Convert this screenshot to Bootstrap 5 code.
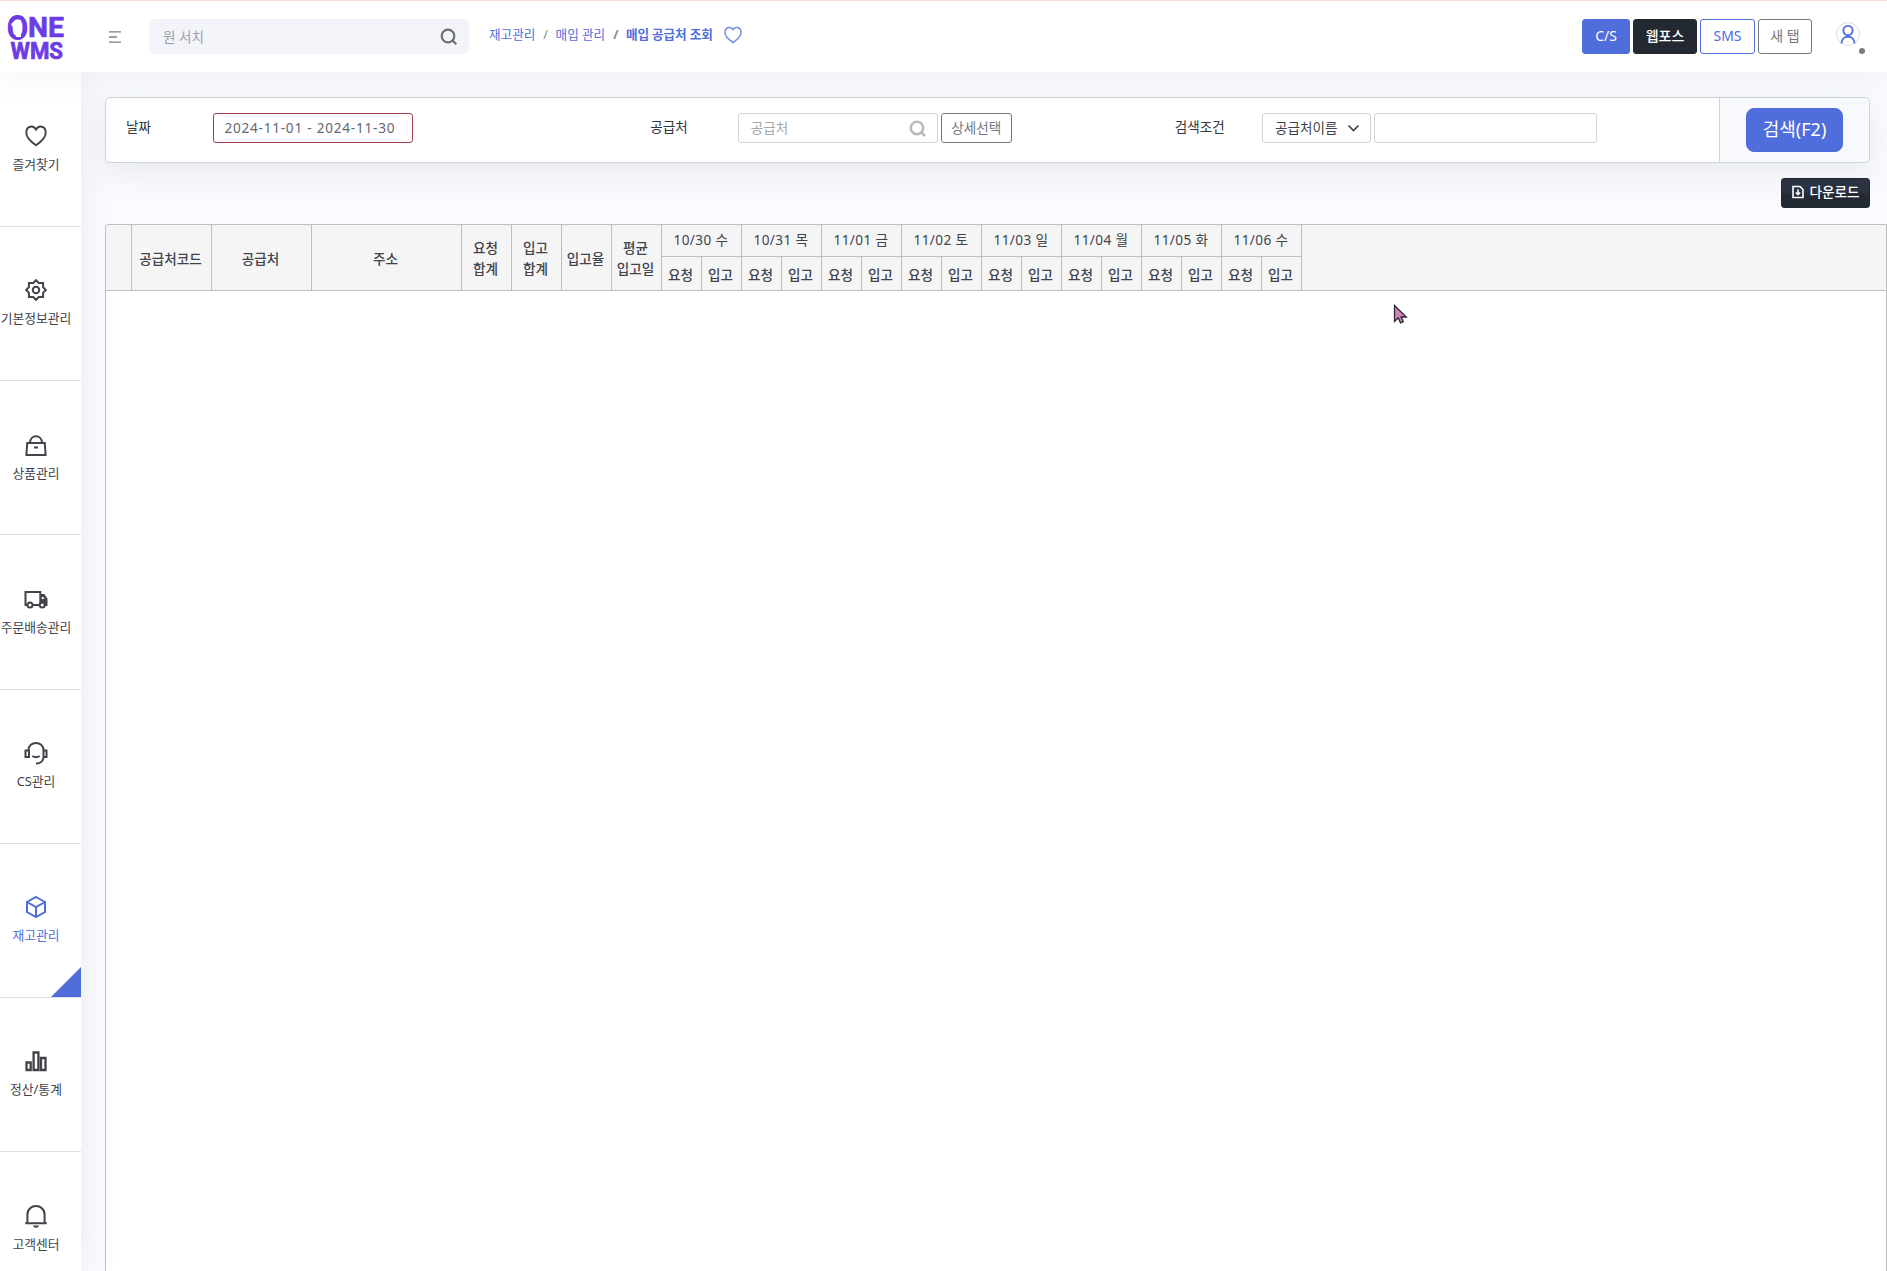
<!DOCTYPE html>
<html lang="ko">
<head>
<meta charset="utf-8">
<meta name="viewport" content="width=device-width, initial-scale=1">
<title>ONE WMS - 매입 공급처 조회</title>
<link href="https://cdn.jsdelivr.net/npm/bootstrap@5.3.0/dist/css/bootstrap.min.css" rel="stylesheet">
<style>
:root{--brand:#4f6ddb;--ink:#42434b;--line:#ced4da}
body{font-family:"Noto Sans","Noto Sans CJK KR",sans-serif;font-size:13.6px;line-height:21px;color:var(--ink);background:#fafbfe;height:1271px;overflow:hidden}
svg{display:block;flex:none}
.topbar{height:72px;border-top:1px solid #f5ddd5;background:#fff;box-shadow:0 0 35px 0 rgba(154,161,171,.15);z-index:3;position:relative}
.logo-box{width:81px;padding-left:7px}
.logo-box svg{overflow:visible}
.menu-icon{margin-left:28px}
.one-search{width:320px;height:35px;margin-left:28px;background:#f3f4f9;border-radius:5px;padding:0 11px 0 14px;color:#98a0a8}
.one-search span{padding-bottom:1px}
.crumbs{font-size:12.6px;line-height:20px;color:var(--brand);padding-bottom:4px}
.crumbs .slash{color:#84888e;padding:0 7.500px 0 8px}
.crumbs b{font-weight:700;letter-spacing:-.1px}
.top-btn{height:35px;border-radius:3px;font-size:14px;line-height:20px;padding:0 0 1px;display:flex;align-items:center;justify-content:center}
.btn-brand{background:var(--brand);border-color:var(--brand);color:#fff}
.btn-ink{background:#232931;border-color:#232931;color:#fff}
.btn-line{border-color:var(--brand);color:var(--brand);background:#fff}
.user-icon{margin:0 17px 0 24px}
.sidebar{width:81px;background:#fff;box-shadow:0 0 35px 0 rgba(154,161,171,.18);z-index:2;position:relative}
.side-item{height:154.200px;flex:none;border-bottom:1px solid #dfe0e6;padding:51.400px 9px 0 0;font-size:12.8px;line-height:20px;white-space:nowrap;position:relative}
.side-item:first-child{height:155px;padding-top:52px}
.side-item svg{width:24px;height:24px;margin-bottom:6px}
.side-item.on{color:var(--brand)}
.side-item.on::after{content:"";position:absolute;right:0;bottom:0;border:15px solid var(--brand);border-top-color:transparent;border-left-color:transparent}
.workspace{padding:25px 0 0 24px}
.filter{height:66px;margin-right:17px;background:#fff;border:1px solid var(--line);border-radius:5px;box-shadow:0 10px 30px rgba(120,135,145,.15)}
.filter-main{padding:15px 20px 0 20px}
.filter-label{line-height:27px;color:#34363e}
.field{height:30px;border:1px solid var(--line);border-radius:3px;background:#fff}
.field span{padding-bottom:1px}
.btn-gray,.field.btn-gray{border-color:#747881;color:#747881;background:#fff}
.field.btn-gray{padding:0 0 1px}
.date-field{width:200px;border-color:#a43c4e;padding-left:10px;color:#646870;letter-spacing:.76px;line-height:28px}
.supplier-field{width:200px;padding:0 11px 0 12px;color:#a4a8ae}
.filter-go{width:150px;background:#f8f9fd;border-left:1px solid var(--line);border-radius:0 5px 5px 0}
.go-btn{width:97px;height:44px;border-radius:8px;font-size:18px;line-height:26px;padding:0 0 2px}
.down-btn{width:89px;height:30px;border-radius:3px;margin:15px 17px 16px 0;padding:0 0 2px;font-size:13.6px;background:linear-gradient(#2b3242 0 45%,#232931 60%)}
.grid-box{border:1px solid #bfbfbf;border-bottom:0;border-radius:4px 0 0 0;background:#fff;overflow:hidden}
.grid-head{background:#f5f5f5;border-bottom:1px solid #bfbfbf;height:66px}
.grid-head table{width:1196px;table-layout:fixed;border-collapse:separate;border-spacing:0;height:65px}
.grid-head th{font-weight:500;padding:0 2px 0 0;text-align:center;vertical-align:middle;border-right:1px solid #bfbfbf;white-space:nowrap}
.grid-head .tall{padding-top:2px}
.grid-head .day{border-bottom:1px solid #bfbfbf;height:32px;padding:0 1px 2px 0;font-weight:400;letter-spacing:.4px}
.grid-head .sub{height:33px;padding-top:2px}
.pointer{position:absolute;left:1393px;top:304px;z-index:5}
</style>
<script src="https://cdn.jsdelivr.net/npm/bootstrap@5.3.0/dist/js/bootstrap.bundle.min.js"></script>
</head>
<body class="d-flex flex-column">
<header class="topbar d-flex align-items-center flex-shrink-0">
  <div class="logo-box">
    <svg width="58" height="50" viewBox="7 12 58 50" fill="#6c3ce6" font-family="Roboto" font-weight="700">
      <text x="6.500" y="40" font-size="34.500" textLength="22" lengthAdjust="spacingAndGlyphs">O</text>
      <path d="M15.500 20h5.500v17h-5V25.500l-4.500 1v-3z" fill="#fff"/>
      <path d="M9 22c1.500-4 4.500-6 9-6l1 2c-4 0-6 1.500-8 4z"/>
      <text x="28" y="37" font-size="28.500" stroke="#6c3ce6" stroke-width=".6" textLength="36" lengthAdjust="spacingAndGlyphs">NE</text>
      <text x="10.500" y="58.500" font-size="24" stroke="#6c3ce6" stroke-width=".7" textLength="52.500" lengthAdjust="spacingAndGlyphs">WMS</text>
    </svg>
  </div>
  <svg class="menu-icon" width="12" height="12" viewBox="0 0 12 12" stroke="#7e7f87" stroke-width="1.300"><path d="M0 .8h12M0 6h8M0 11.200h12"/></svg>
  <div class="one-search d-flex align-items-center justify-content-between">
    <span>원 서치</span>
    <svg width="18" height="18" viewBox="0 0 18 18" fill="none" stroke="#6d7078" stroke-width="2.200"><circle cx="8" cy="8" r="6.300"/><path d="m12.300 12.300 4 4"/></svg>
  </div>
  <nav class="crumbs d-flex align-items-center ms-3 ps-1 text-nowrap">
    <span>재고관리</span><span class="slash">/</span><span>매입 관리</span><span class="slash fw-bold">/</span><b>매입 공급처 조회</b>
    <svg class="ms-2" width="24" height="20" viewBox="0 0 24 20" fill="none" stroke="#7f92e2" stroke-width="1.600"><path d="M12 17.500C9 15.500 4 11.500 4 7.500 4 1.500 10 1.500 12 4.500c2-3 8-3 8 3 0 4-5 8-8 10z"/></svg>
  </nav>
  <div class="d-flex ms-auto" style="gap:3px">
    <button class="btn top-btn btn-brand" style="width:48px">C/S</button>
    <button class="btn top-btn btn-ink fw-medium" style="width:64px">웹포스</button>
    <button class="btn top-btn btn-line" style="width:55px">SMS</button>
    <button class="btn top-btn btn-gray" style="width:54px">새 탭</button>
  </div>
  <svg class="user-icon" width="34" height="34" viewBox="0 0 34 34"><circle cx="12" cy="14" r="11.500" fill="#fff" stroke="#dcdde3"/><g fill="none" stroke="#4f6ddb" stroke-width="1.900"><circle cx="12" cy="10.500" r="4.600"/><path d="M5.500 23.500c0-9 13-9 13 0"/></g><circle cx="26" cy="31" r="3" fill="#747d83"/></svg>
</header>

<div class="d-flex flex-grow-1 overflow-hidden">
  <aside class="sidebar d-flex flex-column flex-shrink-0">
    <div class="side-item d-flex flex-column align-items-center"><svg viewBox="0 0 24 24" fill="none" stroke="#42434b" stroke-width="1.900"><path d="M12 21.200C8 18.500 2.300 14 2.300 8.700 2.300 1.500 9.500 1 12 5.600 14.500 1 21.700 1.500 21.700 8.700c0 5.300-5.700 9.800-9.700 12.500z"/></svg><span>즐겨찾기</span></div>
    <div class="side-item d-flex flex-column align-items-center"><svg viewBox="0 0 24 24" fill="none" stroke="#42434b" stroke-width="2"><path d="m12 2.200 2.800 2.700h4.300v4.300l2.700 2.800-2.700 2.800v4.300h-4.300L12 21.800l-2.800-2.700H4.900v-4.300L2.200 12l2.700-2.800V4.900h4.300z"/><circle cx="12" cy="12" r="3.200"/></svg><span>기본정보관리</span></div>
    <div class="side-item d-flex flex-column align-items-center"><svg viewBox="0 0 24 24" fill="none" stroke="#42434b" stroke-width="2"><path d="M3.200 10h17.600l.8 12H2.400zM6 10c0-9 12-9 12 0M10 14.500h4"/></svg><span>상품관리</span></div>
    <div class="side-item d-flex flex-column align-items-center"><svg viewBox="0 0 24 24" fill="none" stroke="#42434b" stroke-width="2"><path d="M4 18H1.500V5h14.800v13H8M16.300 8h3.500l2.700 4v6h-1.500"/><path d="M17 8.500h3l2.500 5V18H17z" fill="#42434b" stroke="none"/><path d="M17.800 10h1.500l1 2h-2.500z" fill="#fff" stroke="none"/><circle cx="6" cy="18" r="2.500" fill="#fff"/><circle cx="18.200" cy="18" r="2.500" fill="#fff"/></svg><span>주문배송관리</span></div>
    <div class="side-item d-flex flex-column align-items-center"><svg viewBox="0 0 24 24" fill="none" stroke="#42434b" stroke-width="2"><path d="M4.500 9c0-9.500 15-9.500 15 0v7c0 4-3 6.500-7.500 6.500M5 9v7H1.500V9.500H5M19 9.500h3.500V16H19M8.300 15c2 1.300 5.400 1.300 7.400 0"/></svg><span>CS관리</span></div>
    <div class="side-item on d-flex flex-column align-items-center"><svg viewBox="0 0 24 24" fill="none" stroke="#4f6ddb" stroke-width="2"><path d="m12 2 9 5v10l-9 5-9-5V7zM3 7l9 5 9-5M12 12v10"/></svg><span>재고관리</span></div>
    <div class="side-item d-flex flex-column align-items-center"><svg viewBox="0 0 24 24" fill="none" stroke="#42434b" stroke-width="2.300"><path d="M2.500 13.500h4.200V21H2.500zM9.600 3.500h4.800V21H9.600zM17 9h4.500v12H17z"/></svg><span>정산/통계</span></div>
    <div class="side-item border-0 d-flex flex-column align-items-center"><svg viewBox="0 0 24 24" fill="none" stroke="#42434b" stroke-width="2"><path d="M3.400 19v-8.500c0-11.300 17.200-11.300 17.200 0V19M1.200 19.300h21.600"/><path d="M9 21.500h6c-.5 3-5.500 3-6 0z" fill="#42434b" stroke="none"/></svg><span>고객센터</span></div>
  </aside>

  <main class="workspace d-flex flex-column flex-grow-1">
    <section class="filter d-flex flex-shrink-0">
      <div class="filter-main flex-grow-1">
        <div class="row g-0">
          <div class="col-4"><div class="row g-0"><label class="col-2 filter-label">날짜</label><div class="col-10"><div class="field date-field">2024-11-01 - 2024-11-30</div></div></div></div>
          <div class="col-4"><div class="row g-0"><label class="col-2 filter-label">공급처</label><div class="col-10 d-flex" style="gap:3px"><div class="field supplier-field d-flex align-items-center justify-content-between"><span>공급처</span><svg width="17" height="17" viewBox="0 0 17 17" fill="none" stroke="#b9babd" stroke-width="2.500"><circle cx="8" cy="8" r="6.200"/><path d="m12 12 4 4"/></svg></div><button class="field btn-gray" style="width:71px">상세선택</button></div></div></div>
          <div class="col-4"><div class="row g-0"><label class="col-2 filter-label">검색조건</label><div class="col-10 d-flex" style="gap:3px"><div class="field d-flex align-items-center justify-content-between" style="width:109px;padding:0 10px 0 12px"><span>공급처이름</span><svg width="13" height="9" viewBox="0 0 13 9" fill="none" stroke="#42434b" stroke-width="1.700"><path d="m1.500 1.500 5 5 5-5"/></svg></div><div class="field" style="width:223px"></div></div></div></div>
        </div>
      </div>
      <div class="filter-go d-flex align-items-center justify-content-center"><button class="btn btn-brand go-btn">검색(F2)</button></div>
    </section>
    <button class="btn btn-ink down-btn align-self-end flex-shrink-0 d-flex align-items-center justify-content-center fw-medium"><svg class="me-1" width="14" height="14" viewBox="0 0 14 14" fill="none" stroke="#fff" stroke-width="1.600"><path d="M2 1.500h7l3 3v8H2zM7 4.500v5M4.800 7.500 7 9.700l2.200-2.200"/></svg>다운로드</button>
    <section class="grid-box flex-grow-1">
      <div class="grid-head">
        <table>
          <colgroup><col style="width:26px"><col style="width:80px"><col style="width:100px"><col style="width:150px"><col span="4" style="width:50px"><col span="16" style="width:40px"></colgroup>
          <tr><th rowspan="2"></th><th class="tall" rowspan="2">공급처코드</th><th class="tall" rowspan="2">공급처</th><th class="tall" rowspan="2">주소</th><th rowspan="2">요청<br>합계</th><th rowspan="2">입고<br>합계</th><th class="tall" rowspan="2">입고율</th><th rowspan="2">평균<br>입고일</th><th class="day" colspan="2">10/30 수</th><th class="day" colspan="2">10/31 목</th><th class="day" colspan="2">11/01 금</th><th class="day" colspan="2">11/02 토</th><th class="day" colspan="2">11/03 일</th><th class="day" colspan="2">11/04 월</th><th class="day" colspan="2">11/05 화</th><th class="day" colspan="2">11/06 수</th></tr>
          <tr><th class="sub">요청</th><th class="sub">입고</th><th class="sub">요청</th><th class="sub">입고</th><th class="sub">요청</th><th class="sub">입고</th><th class="sub">요청</th><th class="sub">입고</th><th class="sub">요청</th><th class="sub">입고</th><th class="sub">요청</th><th class="sub">입고</th><th class="sub">요청</th><th class="sub">입고</th><th class="sub">요청</th><th class="sub">입고</th></tr>
        </table>
      </div>
    </section>
  </main>
</div>
<svg class="pointer" width="16" height="21" viewBox="0 0 16 21"><path d="M1.500 1.500v16l3.800-3.600 2.200 5 2.800-1.200-2.200-4.700h5.200z" fill="#cf83b8" stroke="#2c2533" stroke-width="1.300"/></svg>
</body>
</html>
